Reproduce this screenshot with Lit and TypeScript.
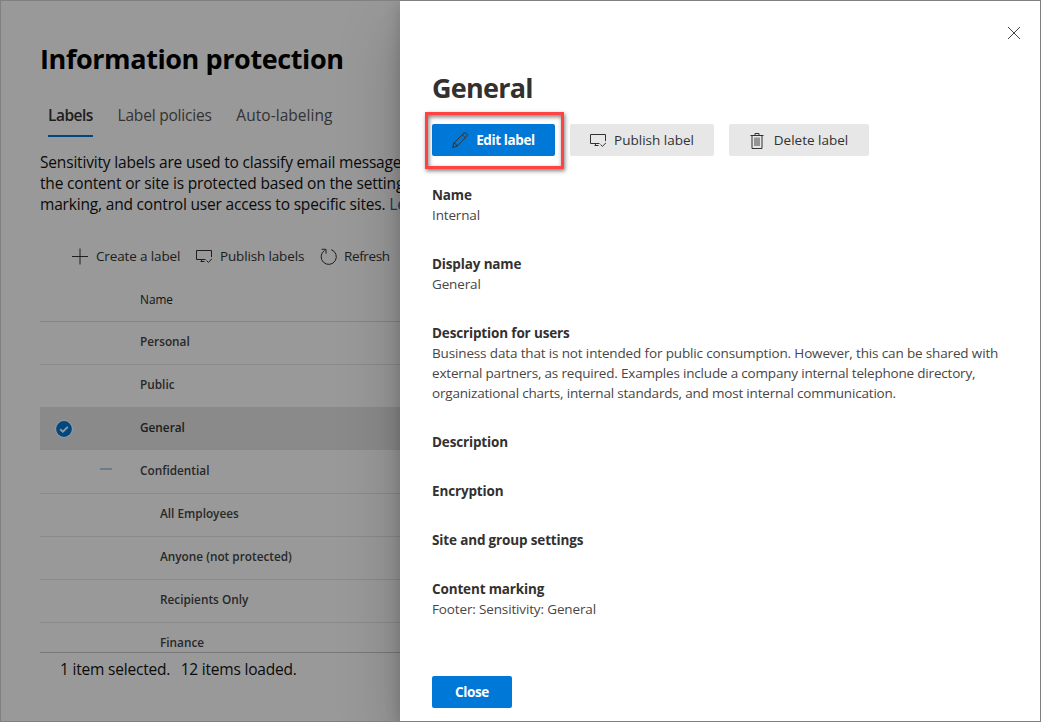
import { LitElement, html, svg, css, nothing } from "lit";
import { customElement, property } from "lit/decorators.js";
import { classMap } from "lit/directives/class-map.js";

const glyphs: Record<string, unknown> = {
  plus: svg`<path d="M8 0.5v16M0 8.500h16" />`,
  publish: svg`
    <path d="M15.500 9V2.500H0.500v9h9M5.500 11.500v2M4.500 13.500h4" />
    <path d="M10.500 12.500l1.900 1.900 3.600-3.600" />`,
  refresh: svg`<path d="M11.200 1.600A7.600 7.600 0 1 1 4.600 2.400M1.600 1.300H6V5.600" />`,
  pencil: svg`
    <path d="M0.700 15.500l1.100-4.400L11.900 1.200q1-.9 2 0l1 1q.9 1 0 2L5 14.300z" />
    <path d="M1.800 11.100q2.600.4 3.200 3.200M10.400 2.700l3 3" />`,
  trash: svg`
    <path d="M0.500 3.500h13M5 3.200V1.500h4v1.700M2 3.700v12.800h10V3.700" />
    <path class="solid" d="M4 5.500h6v8.500h-6z" />`,
  close: svg`<path d="M2 2l12 12M14 2l-12 12" />`,
};

@customElement("line-icon")
class LineIcon extends LitElement {
  @property() name = "";

  static styles = css`
    :host {
      display: block;
      flex: none;
      width: 17px;
      height: 17px;
    }
    .glyph {
      display: block;
      overflow: visible;
      fill: none;
      stroke: currentColor;
      stroke-width: 1;
    }
    .solid {
      fill: currentColor;
      stroke: none;
      opacity: 0.45;
    }
  `;

  render() {
    return html`<svg class="glyph" width="17" height="17" viewBox="0 0 17 17">${glyphs[this.name]}</svg>`;
  }
}

interface Row {
  name: string;
  child?: boolean;
  selected?: boolean;
  expanded?: boolean;
}

const rows: Row[] = [
  { name: "Personal" },
  { name: "Public" },
  { name: "General", selected: true },
  { name: "Confidential", expanded: true },
  { name: "All Employees", child: true },
  { name: "Anyone (not protected)", child: true },
  { name: "Recipients Only", child: true },
  { name: "Finance", child: true },
];

const fields: { label: string; lines: string[] }[] = [
  { label: "Name", lines: ["Internal"] },
  { label: "Display name", lines: ["General"] },
  {
    label: "Description for users",
    lines: [
      "Business data that is not intended for public consumption. However, this can be shared with",
      "external partners, as required. Examples include a company internal telephone directory,",
      "organizational charts, internal standards, and most internal communication.",
    ],
  },
  { label: "Description", lines: [] },
  { label: "Encryption", lines: [] },
  { label: "Site and group settings", lines: [] },
  { label: "Content marking", lines: ["Footer: Sensitivity: General"] },
];

@customElement("labels-page")
class LabelsPage extends LitElement {
  static styles = css`
    :host {
      display: flex;
      flex-direction: column;
      box-sizing: border-box;
      width: 1041px;
      height: 722px;
      padding: 41px 0 0 40px;
      background: #fff;
      color: #111;
      white-space: nowrap;
      overflow: hidden;
    }
    .title {
      margin: 0;
      font-size: 27px;
      font-weight: 700;
      line-height: 36px;
      letter-spacing: -0.4px;
      color: #000;
    }
    .tabs {
      display: flex;
      gap: 24.7px;
      margin: 26px 0 0 8px;
      height: 34px;
      font-size: 15.5px;
      line-height: 24px;
      letter-spacing: -0.2px;
      color: #555;
    }
    .tab {
      box-sizing: border-box;
      height: 34px;
    }
    .tab:last-child {
      letter-spacing: 0.04px;
    }
    .current {
      border-bottom: 2px solid #0078d4;
      font-weight: 600;
      letter-spacing: -0.5px;
      color: #333;
    }
    .intro {
      margin-top: 15px;
      font-size: 15.5px;
      line-height: 21px;
      letter-spacing: -0.18px;
    }
    .link {
      color: #0072a8;
    }
    .commands {
      display: flex;
      align-items: center;
      gap: 15.7px;
      margin: 31px 0 0 32px;
      height: 20px;
      font-size: 13.5px;
      letter-spacing: -0.14px;
      color: #333;
    }
    .command {
      display: flex;
      align-items: center;
      gap: 7px;
    }
    .command:last-child {
      letter-spacing: -0.34px;
    }
    .head,
    .row {
      display: grid;
      grid-template-columns: 48px 52px 1fr;
      align-items: center;
      box-sizing: border-box;
      height: 43px;
      border-bottom: 1px solid #e7e7e7;
      font-size: 11.8px;
      font-weight: 600;
      color: #444;
    }
    .head {
      flex: none;
      margin-top: 13px;
      font-weight: 500;
      border-color: #dcdcdc;
      color: #222;
    }
    .name {
      grid-column: 3;
      line-height: 16px;
      margin-top: -4px;
    }
    .head .name {
      margin-top: -2px;
    }
    .child {
      padding-left: 20px;
    }
    .selected {
      background: #e6e6e6;
      background-clip: padding-box;
      border-color: #fff;
      color: #333;
    }
    .list {
      height: 330px;
      overflow: hidden;
      border-bottom: 1px solid #c8c8c8;
    }
    .check {
      grid-column: 1;
      justify-self: center;
      display: block;
    }
    .dash {
      grid-column: 2;
      width: 12px;
      height: 2px;
      margin: -6px 0 0 12px;
      background: #b4d0e7;
    }
    .status {
      display: flex;
      gap: 10.5px;
      margin: 5px 0 0 20px;
      font-size: 15.5px;
      line-height: 22px;
      letter-spacing: -0.2px;
    }
  `;

  render() {
    return html`
      <h1 class="title">Information protection</h1>
      <div class="tabs">
        <div class="tab current">Labels</div>
        <div class="tab">Label policies</div>
        <div class="tab">Auto-labeling</div>
      </div>
      <div class="intro">
        <div>Sensitivity labels are used to classify email messages</div>
        <div>the content or site is protected based on the settings</div>
        <div>marking, and control user access to specific sites. <span class="link">Learn</span></div>
      </div>
      <div class="commands">
        <div class="command"><line-icon name="plus"></line-icon><span>Create a label</span></div>
        <div class="command"><line-icon name="publish"></line-icon><span>Publish labels</span></div>
        <div class="command"><line-icon name="refresh"></line-icon><span>Refresh</span></div>
      </div>
      <div class="head"><span class="name">Name</span></div>
      <div class="list">
        ${rows.map(
          (row) => html`
            <div class=${classMap({ row: true, selected: !!row.selected })}>
              ${row.selected
                ? html`<svg class="check" width="18" height="18" viewBox="0 0 18 18">
                    <circle cx="9" cy="9" r="8.900" fill="#fff" />
                    <circle cx="9" cy="9" r="7.900" fill="#0078d4" />
                    <path d="M5.200 9.200l2.700 2.500 4.900-4.900" fill="none" stroke="#fff" stroke-width="1.900" />
                  </svg>`
                : nothing}
              ${row.expanded ? html`<span class="dash"></span>` : nothing}
              <span class=${classMap({ name: true, child: !!row.child })}>${row.name}</span>
            </div>
          `,
        )}
      </div>
      <div class="status"><span>1 item selected.</span><span>12 items loaded.</span></div>
    `;
  }
}

@customElement("label-panel")
class LabelPanel extends LitElement {
  static styles = css`
    :host {
      display: flex;
      flex-direction: column;
      align-items: flex-start;
      box-sizing: border-box;
      width: 641px;
      height: 722px;
      padding: 0 32px;
      background: #fff;
      color: #323130;
      white-space: nowrap;
      box-shadow: 0 25.6px 57.6px rgba(0, 0, 0, 0.22), 0 4.8px 14.4px rgba(0, 0, 0, 0.18);
    }
    .dismiss {
      align-self: flex-end;
      margin: 25px -14px 0 0;
      color: #444;
    }
    .title {
      margin: 28px 0 0;
      font-size: 27px;
      font-weight: 700;
      line-height: 36px;
      letter-spacing: -0.75px;
    }
    .actions {
      display: flex;
      gap: 15px;
      margin-top: 18px;
    }
    .button {
      position: relative;
      display: flex;
      align-items: center;
      justify-content: center;
      gap: 7px;
      box-sizing: border-box;
      height: 32px;
      border-radius: 2px;
      background: #e7e7e7;
      font-size: 13.5px;
      font-weight: 500;
    }
    .edit {
      width: 123px;
    }
    .publish {
      width: 144px;
    }
    .delete {
      width: 140px;
    }
    .primary {
      background: #0078d7;
      font-weight: 700;
      letter-spacing: -0.38px;
    }
    .primary .caption {
      color: #fff;
    }
    .callout {
      position: absolute;
      inset: -12px -9px -13px -7px;
      border: 3px solid #ff4343;
      box-shadow: 1px 2px 4px rgba(0, 0, 0, 0.5), inset 1px 2px 4px rgba(0, 0, 0, 0.5);
    }
    .fields {
      display: flex;
      flex-direction: column;
      gap: 29px;
      margin-top: 29px;
      font-size: 13.5px;
      line-height: 20px;
    }
    .label {
      font-weight: 700;
      letter-spacing: -0.15px;
    }
    .value {
      color: #484644;
      letter-spacing: -0.145px;
    }
    .value + .value {
      letter-spacing: -0.19px;
    }
    .done {
      width: 80px;
      margin-top: 57px;
    }
  `;

  render() {
    return html`
      <line-icon class="dismiss" name="close"></line-icon>
      <h2 class="title">General</h2>
      <div class="actions">
        <div class="button primary edit">
          <line-icon name="pencil"></line-icon><span class="caption">Edit label</span>
          <div class="callout"></div>
        </div>
        <div class="button publish"><line-icon name="publish"></line-icon><span>Publish label</span></div>
        <div class="button delete"><line-icon name="trash"></line-icon><span>Delete label</span></div>
      </div>
      <div class="fields">
        ${fields.map(
          (field) => html`
            <div>
              <div class="label">${field.label}</div>
              ${field.lines.map((line) => html`<div class="value">${line}</div>`)}
            </div>
          `,
        )}
      </div>
      <div class="button primary done"><span class="caption">Close</span></div>
    `;
  }
}

@customElement("app-root")
class AppRoot extends LitElement {
  static styles = css`
    :host {
      display: block;
      position: relative;
      width: 1041px;
      height: 722px;
      overflow: hidden;
      font-family: "Open Sans", "Noto Sans", sans-serif;
    }
    .overlay {
      position: absolute;
      inset: 0;
      display: flex;
      justify-content: flex-end;
      background: rgba(0, 0, 0, 0.4);
    }
    .frame {
      position: absolute;
      inset: 0;
      border: 1px solid #808080;
    }
  `;

  render() {
    return html`
      <labels-page></labels-page>
      <div class="overlay"><label-panel></label-panel></div>
      <div class="frame"></div>
    `;
  }
}
